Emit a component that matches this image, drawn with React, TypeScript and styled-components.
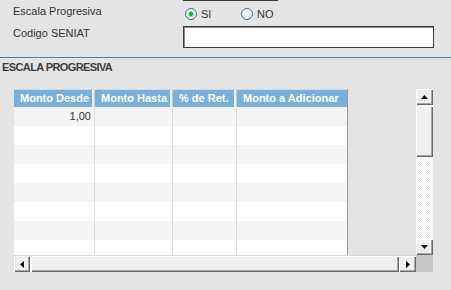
import React from "react";
import styled, { createGlobalStyle } from "styled-components";

const GlobalStyle = createGlobalStyle`
  html, body { margin: 0; padding: 0; background: #e4e4e4; }
  body { font-family: "Liberation Sans", Arial, sans-serif; font-size: 11px; color: #333; }
`;

const Page = styled.div`
  width: 451px;
  height: 290px;
  overflow: hidden;
  background: #e4e4e4;
  display: flex;
  flex-direction: column;
`;

const FieldStub = styled.div`
  margin-left: 183px;
  width: 95px;
  height: 1px;
  background: #3a3a3a;
  flex: none;
`;

const FormRow = styled.div<{ $h: number }>`
  display: flex;
  align-items: flex-start;
  height: ${(p) => p.$h}px;
  flex: none;
`;

const Label = styled.div<{ $pt: number }>`
  width: 170px;
  margin-left: 13px;
  padding-top: ${(p) => p.$pt}px;
  line-height: 13px;
  color: #333;
`;

const RadioGroup = styled.div`
  display: flex;
  gap: 0;
  margin-top: 7px;
`;

const RadioOption = styled.label<{ $w: number }>`
  display: flex;
  align-items: center;
  width: ${(p) => p.$w}px;
  height: 12px;
  line-height: 12px;
  margin-left: 2px;
  color: #333;
`;

const RadioCircle = styled.span<{ $checked?: boolean }>`
  box-sizing: border-box;
  width: 12px;
  height: 12px;
  border-radius: 50%;
  border: 1px solid #3d70a6;
  background: radial-gradient(circle at 40% 35%, #ffffff 0%, #f4f6f8 45%, #d6dde5 100%);
  display: flex;
  align-items: center;
  justify-content: center;
  margin-right: 4px;
  flex: none;
  &::after {
    content: "";
    display: ${(p) => (p.$checked ? "block" : "none")};
    width: 4px;
    height: 4px;
    border-radius: 50%;
    background: #22a022;
    box-shadow: 0 0 1px 1px #a8d8a8;
  }
`;

const TextInput = styled.div`
  box-sizing: border-box;
  width: 251px;
  height: 22px;
  background: #fff;
  border: 1px solid #3a3a3a;
  box-shadow: inset 1px 1px 0 #8a8a8a;
`;

const Separator = styled.div`
  margin-top: 9px;
  height: 1px;
  background: #3a84c8;
  flex: none;
`;

const SectionTitle = styled.div`
  margin: 3px 0 0 2px;
  height: 13px;
  line-height: 13px;
  font-weight: bold;
  font-size: 11px;
  letter-spacing: -0.6px;
  color: #3c3c3c;
  flex: none;
`;

const GridFrame = styled.div`
  margin: 15px 0 0 14px;
  display: grid;
  grid-template-columns: 402px 17px;
  grid-template-rows: 166px 17px;
  flex: none;
`;

const Viewport = styled.div`
  overflow: hidden;
  background: #e4e4e4;
  display: flex;
  align-items: flex-start;
`;

const Table = styled.div`
  width: 333px;
  height: 166px;
  border-right: 1px solid #9a9a9a;
  background: #fff;
  display: flex;
  flex-direction: column;
`;

const cols = [81, 78, 64, 110];

const HeaderRow = styled.div`
  display: grid;
  grid-template-columns: ${cols.map((c) => c + "px").join(" ")};
  height: 18px;
  background: #7aafdb;
  border-top: 1px solid #c8dcee;
  box-sizing: border-box;
  flex: none;
`;

const HeaderCell = styled.div<{ $last?: boolean }>`
  box-sizing: border-box;
  padding-left: 6px;
  line-height: 17px;
  font-weight: bold;
  color: #fff;
  white-space: nowrap;
  overflow: hidden;
  border-right: ${(p) => (p.$last ? "none" : "1px solid #c9c9c9")};
  box-shadow: ${(p) => (p.$last ? "none" : "inset -2px 0 0 #e9f1f8")};
`;

const BodyRow = styled.div<{ $alt: boolean }>`
  display: grid;
  grid-template-columns: ${cols.map((c) => c + "px").join(" ")};
  height: 19px;
  background: ${(p) => (p.$alt ? "#f4f4f4" : "#ffffff")};
  flex: none;
`;

const BodyCell = styled.div<{ $last?: boolean; $right?: boolean }>`
  box-sizing: border-box;
  border-right: ${(p) => (p.$last ? "none" : "1px solid #dcdcdc")};
  line-height: 19px;
  text-align: ${(p) => (p.$right ? "right" : "left")};
  padding: 0 3px;
  color: #333;
`;

const bevel = `
  background: #efefef;
  box-shadow: inset 1px 1px 0 #ffffff, inset -1px -1px 0 #6a6a6a, inset -2px -2px 0 #a6a6a6;
`;

const VScroll = styled.div`
  display: flex;
  flex-direction: column;
  background: repeating-conic-gradient(#efefef 0 25%, #ffffff 0 50%) 0 0 / 2px 2px;
`;

const HScroll = styled.div`
  display: flex;
  box-sizing: border-box;
  border-top: 1px solid #dadada;
  background: repeating-conic-gradient(#efefef 0 25%, #ffffff 0 50%) 0 0 / 2px 2px;
`;

const ScrollButton = styled.div<{ $w: number; $h: number }>`
  ${bevel}
  width: ${(p) => p.$w}px;
  height: ${(p) => p.$h}px;
  display: flex;
  align-items: center;
  justify-content: center;
  flex: none;
`;

const VThumb = styled.div`
  ${bevel}
  margin-top: 1px;
  height: 51px;
  width: 17px;
  flex: none;
`;

const HThumb = styled.div`
  ${bevel}
  margin-left: 1px;
  flex: 1;
`;

const Corner = styled.div`
  background: #c6c6c6;
`;

const Arrow = ({ dir }: { dir: "up" | "down" | "left" | "right" }) => {
  const pts: Record<string, string> = {
    up: "3.5,0 7,4 0,4",
    down: "0,0 7,0 3.5,4",
    left: "0,3.5 4,0 4,7",
    right: "0,0 4,3.5 0,7",
  };
  const vertical = dir === "up" || dir === "down";
  return (
    <svg width={vertical ? 7 : 4} height={vertical ? 4 : 7} viewBox={vertical ? "0 0 7 4" : "0 0 4 7"}>
      <polygon points={pts[dir]} fill="#000" />
    </svg>
  );
};

const rows = Array.from({ length: 9 }, (_, i) => i);

export default function App() {
  return (
    <>
      <GlobalStyle />
      <Page>
        <FieldStub />
        <FormRow $h={25}>
          <Label $pt={4}>Escala Progresiva</Label>
          <RadioGroup>
            <RadioOption $w={54}>
              <RadioCircle $checked />
              SI
            </RadioOption>
            <RadioOption $w={50}>
              <RadioCircle />
              NO
            </RadioOption>
          </RadioGroup>
        </FormRow>
        <FormRow $h={22}>
          <Label $pt={1}>Codigo SENIAT</Label>
          <TextInput />
        </FormRow>
        <Separator />
        <SectionTitle>ESCALA PROGRESIVA</SectionTitle>
        <GridFrame>
          <Viewport>
            <Table>
              <HeaderRow>
                <HeaderCell>Monto Desde</HeaderCell>
                <HeaderCell>Monto Hasta</HeaderCell>
                <HeaderCell>% de Ret.</HeaderCell>
                <HeaderCell $last>Monto a Adicionar</HeaderCell>
              </HeaderRow>
              {rows.map((r) => (
                <BodyRow key={r} $alt={r % 2 === 0}>
                  <BodyCell $right>{r === 0 ? "1,00" : ""}</BodyCell>
                  <BodyCell />
                  <BodyCell />
                  <BodyCell $last />
                </BodyRow>
              ))}
            </Table>
          </Viewport>
          <VScroll>
            <ScrollButton $w={17} $h={16}>
              <Arrow dir="up" />
            </ScrollButton>
            <VThumb />
            <div style={{ flex: 1 }} />
            <ScrollButton $w={17} $h={16}>
              <Arrow dir="down" />
            </ScrollButton>
          </VScroll>
          <HScroll>
            <ScrollButton $w={16} $h={16}>
              <Arrow dir="left" />
            </ScrollButton>
            <HThumb />
            <ScrollButton $w={17} $h={16}>
              <Arrow dir="right" />
            </ScrollButton>
          </HScroll>
          <Corner />
        </GridFrame>
      </Page>
    </>
  );
}
